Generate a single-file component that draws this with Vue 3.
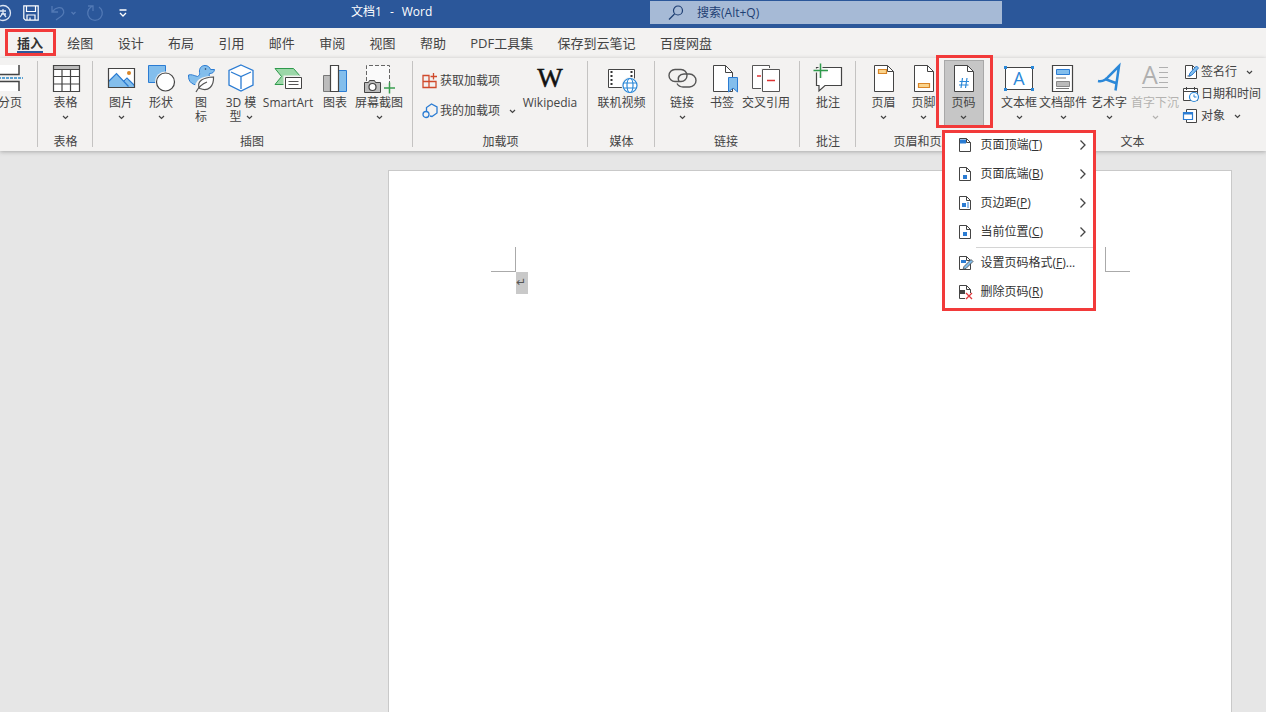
<script setup>
import { ref } from 'vue'

const search = ref('')

const tabs = ['插入', '绘图', '设计', '布局', '引用', '邮件', '审阅', '视图', '帮助', 'PDF工具集', '保存到云笔记', '百度网盘']

const sheet = '<path d="M6.5 1.5h13l6 6v20h-19z" fill="#fff" stroke="#444"/><path d="M19.5 1.5v6h6" fill="none" stroke="#444"/>'

const icons = {
  pagebreak: '<path d="M0 1h25v9H0zM0 18h25v9H0z" fill="#fff"/><path d="M0 10.500h25V1M0 17.500h25V27" fill="none" stroke="#444" stroke-width="1.500"/><path d="M0 14h29" stroke="#2b88c8" stroke-width="1.500" stroke-dasharray="3 1"/>',
  table: '<path d="M3.500 1.500h26v26h-26z" fill="#fff"/><path d="M3.500 1.500h26v4h-26z" fill="#bbb"/><path d="M3.500 1.500h26v26h-26zM3.500 5.500h26M3.500 12.500h26M3.500 20h26M12 5.500v22M20.500 5.500v22" fill="none" stroke="#444" stroke-width="1.200"/>',
  picture: '<path d="M3.500 4.500h26v19h-26z" fill="#fff"/><path d="M3.500 17.500l8-8 8 8 3-3 7 7v2h-26z" fill="#83beec"/><path d="M3.500 17.500l8-8 12 13M18.500 17.500l3.500-3.500 7.500 7.500" fill="none" stroke="#2b7cd3" stroke-width="1.200"/><circle cx="24" cy="9" r="2" fill="#d98527"/><path d="M3.500 4.500h26v19h-26z" fill="none" stroke="#444" stroke-width="1.200"/>',
  shapes: '<path d="M3.500 1.500h17v17h-17z" fill="#83beec" stroke="#2b7cd3"/><circle cx="20.500" cy="18" r="10.500" fill="#f3f2f1"/><circle cx="20.500" cy="18" r="9" fill="#fff" stroke="#444" stroke-width="1.200"/>',
  icons: '<path d="M3.500 11c3-1 5 .500 9 1.500 2-1 2.500-2 2-4C14 4 16.500 1.500 20 1.500c3 0 5 2 5.500 4h4c-.500 3-2 4-5 4-1 2 .500 3 .500 6 0 4-4 6-9 6-8 0-13-3-12.500-10.500z" fill="#83beec" stroke="#2b7cd3"/><circle cx="20.500" cy="5" r=".8" fill="#235"/><path d="M12 26c-1-8 4-12 17-12.500 0 9-5 14-13 11.500" fill="#f3f2f1" stroke="#f3f2f1" stroke-width="4"/><path d="M14 24c-2-7 4-10.500 14.500-11 .500 9-5 15-13.500 11.500z" fill="#fff" stroke="#555" stroke-width="1.200"/><path d="M11 28c2-4 6-8 11-10" fill="none" stroke="#555" stroke-width="1.200"/>',
  cube: '<path d="M16 1l12 5.500V21L16 27 4 21V6.500z" fill="#fff" stroke="#2b7cd3" stroke-width="1.300"/><path d="M6 8l10 4.500L26 8M16 12.500V25" fill="none" stroke="#2b7cd3" stroke-width="1.300"/>',
  smartart: '<path d="M3 4.500h18.500l7 8-7 8H3l6.500-8z" fill="#9bd7a8" stroke="#2e9a4c"/><path d="M13.500 13.500h16v11h-16z" fill="#fff" stroke="#f3f2f1" stroke-width="4"/><path d="M13.500 13.500h16v11h-16z" fill="#fff" stroke="#444"/><path d="M16.500 17.500h10M16.500 20.500h10" stroke="#555"/>',
  chart: '<path d="M4.500 11.500h7v16h-7z" fill="#bcbcbc" stroke="#777"/><path d="M19.500 6.500h8v21h-8z" fill="#83beec" stroke="#2b7cd3"/><path d="M11.500 1.500h8v26h-8z" fill="#fff" stroke="#444" stroke-width="1.200"/>',
  screenshot: '<path d="M3.500 17V1.500h23V20" fill="#fafafa" stroke="#666" stroke-dasharray="4 2"/><path d="M1.500 18.500h4l1-2h5l1 2h5v10h-16z" fill="#bbb" stroke="#444"/><circle cx="9.500" cy="23" r="3.500" fill="#fff" stroke="#444" stroke-width="1.200"/><path d="M26.500 18.500v11M21 24h11" stroke="#3a9e50" stroke-width="1.500"/>',
  wiki: '<text x="16" y="23" text-anchor="middle" font-family="Liberation Serif, serif" font-size="27" stroke="#111" stroke-width=".5" fill="#111">W</text>',
  video: '<path d="M2.500 5.500h26v18h-26z" fill="#fff" stroke="#444"/><path d="M5.500 7v16M25.500 7v10" stroke="#333" stroke-width="2" stroke-dasharray="2 2"/><circle cx="24" cy="21.500" r="8.500" fill="#f3f2f1"/><g fill="#fff" stroke="#2b88d8" stroke-width="1.200"><circle cx="24" cy="21.500" r="7"/><ellipse cx="24" cy="21.500" rx="3" ry="7"/><path d="M17.500 19h13M17.500 24h13"/></g>',
  link: '<g fill="none" stroke="#555" stroke-width="1.400"><rect x="3" y="5.500" width="18" height="12" rx="6"/><path d="M13 17.500c-2-4 .500-7.500 5-7.500h5.500a6.300 6.300 0 0 1 0 13h-6.500c-2.500 0-4.500-1-6-3.500" /></g>',
  bookmark: '<path d="M7.500 1.500h12l7 7v19h-19z" fill="#fff" stroke="#444"/><path d="M19.500 1.500v7h7" fill="none" stroke="#444"/><path d="M22.500 13.500h9v14.500l-4.500-4-4.500 4z" fill="#83beec" stroke="#2b7cd3"/>',
  crossref: '<path d="M2.500 1.500h17v23h-17z" fill="#fff" stroke="#555"/><path d="M7 12h5" stroke="#d33" stroke-width="1.500"/><path d="M12.500 5.500h17v22h-17z" fill="#fff" stroke="#f3f2f1" stroke-width="3"/><path d="M12.500 5.500h17v22h-17z" fill="#fff" stroke="#555"/><path d="M17 16.500h8" stroke="#d33" stroke-width="1.500"/>',
  comment: '<path d="M4.500 3.500h25v18H13l-6 5.500v-5.500H4.500z" fill="#fff" stroke="#444" stroke-width="1.200"/><path d="M8.500 0v14M2 6.500h13" stroke="#f3f2f1" stroke-width="4"/><path d="M8.500-.5v14.500M1.500 6.500H16" stroke="#2e9a4c" stroke-width="1.500"/>',
  header: sheet + '<path d="M10.500 5.500h8v4h-8z" fill="#fbd48c" stroke="#d98527" stroke-width="1.200"/>',
  footer: sheet + '<path d="M10.500 19.500h11v4h-11z" fill="#fbd48c" stroke="#d98527" stroke-width="1.200"/>',
  pagenum: sheet + '<path d="M14.500 14l-1.500 10M19 14l-1.500 10M11.500 17.500h9.500M11 21h9.500" stroke="#2b88d8" stroke-width="1.200"/>',
  textbox: '<path d="M2.500 3.500h27v22h-27z" fill="#fff" stroke="#444"/><g fill="#2b88d8"><path d="M1 2h3v3H1zM28 2h3v3h-3zM1 24h3v3H1zM28 24h3v3h-3z"/></g><text x="16" y="21" text-anchor="middle" font-family="Open Sans, sans-serif" font-size="18" fill="#2b88d8">A</text>',
  parts: '<path d="M5.500 1.500h20v26h-20z" fill="#fff" stroke="#444" stroke-width="1.200"/><path d="M9.500 5.500h13v5h-13z" fill="#83beec" stroke="#2b7cd3"/><path d="M9 14h10M9 24.500h13" stroke="#777"/><path d="M9.500 17.500h13v5h-13z" fill="#bbb" stroke="#888"/>',
  wordart: '<path d="M5 17c5 1 8-1 11-5l10-10-3.500 24.500M12 15l12 4.500" fill="none" stroke="#2b88d8" stroke-width="2.500"/>',
  dropcap: '<text x="11" y="20" text-anchor="middle" font-family="Open Sans, sans-serif" font-size="25" fill="#b0b0b0">A</text><path d="M20 3.500h9M20 8.500h9M20 13.500h9M20 18.500h9M3 23.500h26" stroke="#b0b0b0" stroke-width="1.200"/>'
}

const small = {
  store: '<g fill="none" stroke="#d04a2c" stroke-width="1.300"><path d="M1 2.500h6v6H1zM1 8.500h6v6H1zM7 8.500h7v6H7zM11.500 0v6.500M8.500 3.500H15"/></g>',
  myaddins: '<g fill="none" stroke="#2b7cd3" stroke-width="1.300"><path d="M4.500 8V4.500l5-3.500L15 4v6l-5 3.500-2-.5"/><circle cx="4" cy="11.500" r="3"/></g>',
  sign: '<path d="M2.500 1.500h7l4 4v9h-11z" fill="#fff" stroke="#444"/><path d="M9.500 1.500v4h4M4.500 12h3" fill="none" stroke="#444"/><path d="M6 12l1-3 6.500-7 2 2L9 11z" fill="#83beec" stroke="#2b7cd3"/>',
  date: '<path d="M.5 2.500h14v12H.5z" fill="#fff" stroke="#444"/><path d="M.5 5.500h14M3.500 1v3M11.500 1v3" stroke="#444"/><circle cx="11" cy="11" r="4.500" fill="#fff" stroke="#2b88d8" stroke-width="1.200"/><path d="M11 8.500V11h2.500" fill="none" stroke="#2b88d8"/>',
  object: '<path d="M3.500 1.500h10v13h-10z" fill="#fff" stroke="#444"/><path d="M.5 4.500h9v7h-9z" fill="#fff" stroke="#2b7cd3" stroke-width="1.200"/><path d="M.5 5.500h9" stroke="#2b7cd3" stroke-width="2"/>'
}

const menuSheet = '<path d="M1.500 1.500h7l4 4v9h-11z" fill="#fff" stroke="#444"/><path d="M8.500 1.500v4h4" fill="none" stroke="#444"/>'
const menuItems = [
  { text: '页面顶端', key: 'T', sub: true, icon: menuSheet + '<path d="M2 2.500h6v4H2z" fill="#2b7cd3"/>' },
  { text: '页面底端', key: 'B', sub: true, icon: menuSheet + '<path d="M5 9h4v4H5z" fill="#2b7cd3"/>' },
  { text: '页边距', key: 'P', sub: true, icon: menuSheet + '<path d="M4 8h4v4H4z" fill="#2b7cd3"/><path d="M10 7v6" stroke="#2b7cd3"/>' },
  { text: '当前位置', key: 'C', sub: true, icon: menuSheet + '<path d="M5 8h4v4H5z" fill="#2b7cd3"/>' },
  { text: '设置页码格式', key: 'F', tail: '...', divided: true, icon: menuSheet + '<path d="M3 5h5v3H3z" fill="#2b7cd3"/><path d="M5 14.500l1-3 7-7 2 2-7 7z" fill="#83beec" stroke="#444" stroke-width=".8"/>' },
  { text: '删除页码', key: 'R', icon: menuSheet + '<path d="M1 6h6v4H1z" fill="#444"/><path d="M7 9h8v7H7z" fill="#fff"/><path d="M8 9l6 6M14 9l-6 6" stroke="#e0393e" stroke-width="1.300"/>' }
]

const groups = [
  { id: 'pages', name: '', buttons: [{ icon: 'pagebreak', lines: ['分页'] }] },
  { id: 'tables', name: '表格', buttons: [{ icon: 'table', lines: ['表格'], drop: true }] },
  {
    id: 'illustrations', name: '插图', buttons: [
      { icon: 'picture', lines: ['图片'], drop: true },
      { icon: 'shapes', lines: ['形状'], drop: true },
      { icon: 'icons', lines: ['图', '标'] },
      { icon: 'cube', lines: ['3D 模', '型'], drop: true },
      { icon: 'smartart', lines: ['SmartArt'], size: 'wider' },
      { icon: 'chart', lines: ['图表'] },
      { icon: 'screenshot', lines: ['屏幕截图'], drop: true, size: 'wide' }
    ]
  },
  {
    id: 'addins', name: '加载项',
    stack: [{ icon: 'store', text: '获取加载项' }, { icon: 'myaddins', text: '我的加载项', drop: true }],
    buttons: [{ icon: 'wiki', lines: ['Wikipedia'], size: 'widest' }]
  },
  { id: 'media', name: '媒体', buttons: [{ icon: 'video', lines: ['联机视频'], size: 'wide' }] },
  {
    id: 'links', name: '链接', buttons: [
      { icon: 'link', lines: ['链接'], drop: true },
      { icon: 'bookmark', lines: ['书签'] },
      { icon: 'crossref', lines: ['交叉引用'], size: 'wide' }
    ]
  },
  { id: 'comments', name: '批注', buttons: [{ icon: 'comment', lines: ['批注'] }] },
  {
    id: 'headers', name: '页眉和页脚', buttons: [
      { icon: 'header', lines: ['页眉'], drop: true },
      { icon: 'footer', lines: ['页脚'], drop: true },
      { icon: 'pagenum', lines: ['页码'], drop: true, open: true }
    ]
  },
  {
    id: 'text', name: '文本',
    stack: [{ icon: 'sign', text: '签名行', drop: true }, { icon: 'date', text: '日期和时间' }, { icon: 'object', text: '对象', drop: true }],
    buttons: [
      { icon: 'textbox', lines: ['文本框'], drop: true },
      { icon: 'parts', lines: ['文档部件'], drop: true, size: 'wide' },
      { icon: 'wordart', lines: ['艺术字'], drop: true, size: 'mid' },
      { icon: 'dropcap', lines: ['首字下沉'], drop: true, size: 'wide', disabled: true }
    ]
  }
]
</script>

<template>
  <div class="window">
    <header class="titlebar">
      <div class="quick">
        <button type="button" class="q auto" aria-label="自动保存">
          <svg width="18" height="18" viewBox="0 0 18 18" fill="none" stroke="#dce6f4" stroke-width="1.300"><circle cx="9" cy="9" r="7.500" /><path d="M6 7h6M7 10h5M9 5v4l-3 4M9 9l3 4" /></svg>
        </button>
        <button type="button" class="q save" aria-label="保存">
          <svg width="16" height="16" viewBox="0 0 16 16" fill="none" stroke="#fff" stroke-width="1.200"><path d="M.8.800h14.400v14.400H2.500L.8 13.500zM3.500 1v5.500h9V1M4 15v-5h8v5M7 15v-2.500" /></svg>
        </button>
        <button type="button" class="q" aria-label="撤消">
          <svg width="24" height="16" viewBox="0 0 24 16" fill="none" stroke="#5279b5" stroke-width="1.300"><path d="M1 1v6h6M1.500 6.500C5 2 11 1 12.500 5.500S9 12 5 15" /><path d="M20.500 7l2 2 2-2" /></svg>
        </button>
        <button type="button" class="q" aria-label="重复">
          <svg width="18" height="18" viewBox="0 0 18 18" fill="none" stroke="#5279b5" stroke-width="1.300"><path d="M2 2h5v5M13 3a7.300 7.300 0 1 1-8 0l2-1" /></svg>
        </button>
        <button type="button" class="q custom" aria-label="自定义快速访问工具栏">
          <svg width="8" height="8" viewBox="0 0 8 8" fill="none" stroke="#fff" stroke-width="1.300"><path d="M.5 1h7M1 4l3 3 3-3" /></svg>
        </button>
      </div>
      <div class="doc-title"><span>文档1</span><span>-</span><span>Word</span></div>
      <label class="search">
        <svg width="16" height="16" viewBox="0 0 16 16" fill="none" stroke="#1e3f73" stroke-width="1.200"><circle cx="10" cy="5.500" r="4.500" /><path d="M6.500 9L1 14.500" /></svg>
        <input v-model="search" type="text" aria-label="搜索" placeholder="搜索(Alt+Q)">
      </label>
    </header>

    <nav class="tabs">
      <button v-for="(tab, i) in tabs" :key="tab" type="button" class="tab" :class="{ active: i === 0 }">
        {{ tab }}<span v-if="i === 0" class="mark tab-mark"></span>
      </button>
    </nav>

    <section class="ribbon">
      <div v-for="g in groups" :key="g.id" class="group" :class="g.id">
        <div class="row">
          <div v-for="b in g.buttons" :key="b.icon" class="slot">
            <button type="button" class="big" :class="[b.size, { open: b.open }]" :disabled="b.disabled">
              <svg class="glyph" width="32" height="28" viewBox="0 0 32 28" v-html="icons[b.icon]"></svg>
              <span v-for="(line, n) in b.lines" :key="n" class="line">{{ line }}<svg v-if="b.drop && n === 1" class="chev inline" width="7" height="5" viewBox="0 0 7 5"><path d="M1 1l2.500 2.500L6 1" /></svg></span>
              <span v-if="b.drop && b.lines.length === 1" class="line"><svg class="chev" width="7" height="5" viewBox="0 0 7 5"><path d="M1 1l2.500 2.500L6 1" /></svg></span>
            </button>
            <template v-if="b.open">
              <span class="mark button-mark"></span>
              <div class="menu" role="menu">
                <button v-for="m in menuItems" :key="m.key" type="button" role="menuitem" class="item" :class="{ divided: m.divided }">
                  <svg width="16" height="16" viewBox="0 0 16 16" v-html="m.icon"></svg>
                  <span class="item-text">{{ m.text }}(<u>{{ m.key }}</u>){{ m.tail }}</span>
                  <svg v-if="m.sub" class="arrow" width="8" height="12" viewBox="0 0 8 12"><path d="M1.500 1.500L6 6l-4.500 4.500" /></svg>
                </button>
                <span class="mark menu-mark"></span>
              </div>
            </template>
          </div>
          <div v-if="g.stack" class="stack">
            <button v-for="s in g.stack" :key="s.icon" type="button" class="small">
              <svg width="16" height="16" viewBox="0 0 16 16" v-html="small[s.icon]"></svg>
              <span>{{ s.text }}</span>
              <svg v-if="s.drop" class="chev side" width="7" height="5" viewBox="0 0 7 5"><path d="M1 1l2.500 2.500L6 1" /></svg>
            </button>
          </div>
        </div>
        <div class="caption">{{ g.name }}</div>
      </div>
    </section>

    <main class="canvas">
      <article class="page">
        <div class="corners"><i class="corner left"></i><i class="corner right"></i></div>
        <p class="para"><span>↵</span></p>
      </article>
    </main>
  </div>
</template>

<style>
body {
  margin: 0;
  overflow: hidden;
}
</style>

<style scoped>
.window {
  min-height: 100vh;
  display: flex;
  flex-direction: column;
  overflow: hidden;
  background: #e6e6e6;
  color: #444;
  font: 12px/14px "Open Sans", "Noto Sans CJK SC", sans-serif;
}
button {
  margin: 0;
  padding: 0;
  border: 0;
  background: none;
  color: inherit;
  font: inherit;
}
svg {
  flex: none;
  overflow: visible;
}
.titlebar {
  display: grid;
  grid-template-columns: 351px 299px 352px 1fr;
  height: 28px;
  background: #2b579a;
  color: #fff;
}
.quick {
  display: flex;
  align-items: center;
  gap: 8px;
  height: 25px;
}
.q {
  flex: none;
  display: flex;
  justify-content: center;
  align-items: center;
  width: 24px;
  height: 24px;
}
.auto {
  margin-left: -9px;
}
.save {
  margin-left: -4px;
}
.custom {
  margin-left: -4px;
}
.doc-title {
  display: flex;
  gap: 8px;
  line-height: 24px;
}
.search {
  display: flex;
  align-items: center;
  gap: 13px;
  height: 23px;
  margin-top: 1px;
  padding-left: 18px;
  background: #a6bad6;
}
.search input {
  flex: 1;
  min-width: 0;
  padding: 0;
  border: 0;
  outline: 0;
  background: none;
  color: #1e3f73;
  font: inherit;
}
.search input::placeholder {
  color: #1e3f73;
  opacity: 1;
}
.tabs {
  display: flex;
  justify-content: space-between;
  height: 30px;
  padding: 0 554px 0 17px;
  font-size: 13px;
}
.tabs,
.ribbon {
  background: #f3f2f1;
}
.tab {
  position: relative;
  line-height: 30px;
  white-space: nowrap;
}
.tab.active {
  color: #333;
  font-weight: 700;
}
.tab.active::before {
  content: "";
  position: absolute;
  inset: auto 0 5px;
  height: 2px;
  background: #2b579a;
}
.mark {
  position: absolute;
  border: 3px solid #f23a3a;
  pointer-events: none;
}
.tab-mark {
  inset: 1px -13px 2px -12px;
}
.ribbon {
  position: relative;
  z-index: 1;
  display: flex;
  height: 93px;
  box-shadow: 0 1px 4px #aaa;
}
.group {
  position: relative;
  flex: none;
  display: flex;
  flex-direction: column;
  box-sizing: border-box;
}
.group::after {
  content: "";
  position: absolute;
  inset: 3px 0 4px auto;
  width: 1px;
  background: #c4c3c2;
}
.row {
  display: flex;
  justify-content: center;
  height: 68px;
  margin-top: 2px;
}
.caption {
  margin-top: 7px;
  text-align: center;
}
.pages { width: 38px; }
.pages .row { justify-content: flex-end; padding-right: 8px; }
.tables { width: 55px; }
.illustrations { width: 320px; padding-right: 2px; }
.addins { width: 175px; }
.addins .row { flex-direction: row-reverse; justify-content: flex-end; padding-left: 9px; }
.addins .stack { width: 98px; padding-top: 6px; }
.addins .small { height: 30px; }
.media { width: 67px; }
.links { width: 145px; padding-right: 3px; }
.comments { width: 56px; }
.headers { width: 135px; z-index: 2; }
.headers::after { display: none; }
.text { flex: 1 0 auto; padding-left: 8px; }
.text .row { justify-content: flex-start; }
.text .stack { padding: 1px 0 0 4px; }
.text::after { display: none; }
.slot {
  position: relative;
  flex: none;
}
.big {
  display: flex;
  flex-direction: column;
  align-items: center;
  width: 40px;
  height: 68px;
  padding-top: 4px;
}
.big.mid { width: 44px; }
.big.wide { width: 48px; }
.big.wider { width: 54px; }
.big.widest { width: 60px; }
.big:disabled {
  color: #b4b2b0;
}
.big.open {
  background: #c6c6c6;
  outline: 1px solid #a8a8a8;
  outline-offset: -1px;
}
.glyph {
  margin-bottom: 4px;
}
.line {
  display: flex;
  align-items: center;
  height: 14px;
  white-space: nowrap;
}
.chev {
  fill: none;
  stroke: currentColor;
  stroke-width: 1.2;
}
.inline {
  margin-left: 4px;
}
.stack {
  display: flex;
  flex-direction: column;
}
.small {
  display: flex;
  align-items: center;
  gap: 2px;
  height: 22px;
  white-space: nowrap;
}
.side {
  margin-left: 7px;
}
.button-mark {
  inset: -5px -9px 0 -8px;
}
.menu {
  position: absolute;
  top: 70px;
  left: -2px;
  width: 154px;
  padding-bottom: 5px;
  box-sizing: border-box;
  background: #fff;
  color: #333;
}
.menu-mark {
  inset: 0;
}
.item {
  display: flex;
  align-items: center;
  gap: 7px;
  width: 100%;
  height: 29px;
  padding: 0 9px 0 16px;
}
.item.divided {
  position: relative;
  height: 31px;
  padding-top: 2px;
}
.item.divided::before {
  content: "";
  position: absolute;
  inset: 1px 3px auto 34px;
  height: 1px;
  background: #d4d4d4;
}
.item-text {
  flex: 1;
  text-align: left;
  white-space: nowrap;
}
.arrow {
  fill: none;
  stroke: #444;
  stroke-width: 1.3;
}
.canvas {
  flex: 1;
  display: flex;
  padding: 19px 34px 0 388px;
}
.page {
  flex: 1;
  padding: 76px 101px 0 102px;
  border: 1px solid #c9c9c9;
  border-bottom: 0;
  background: #fff;
}
.corners {
  display: flex;
  justify-content: space-between;
}
.corner {
  box-sizing: border-box;
  width: 25px;
  height: 25px;
  border-bottom: 1px solid #aaa;
}
.corner.left { border-right: 1px solid #aaa; }
.corner.right { border-left: 1px solid #aaa; }
.para {
  display: flex;
  margin: 0 0 0 25px;
}
.para span {
  width: 12px;
  height: 22px;
  background: #c9c9c9;
  color: #555;
  font: 12px/20px "DejaVu Sans", sans-serif;
}
</style>
